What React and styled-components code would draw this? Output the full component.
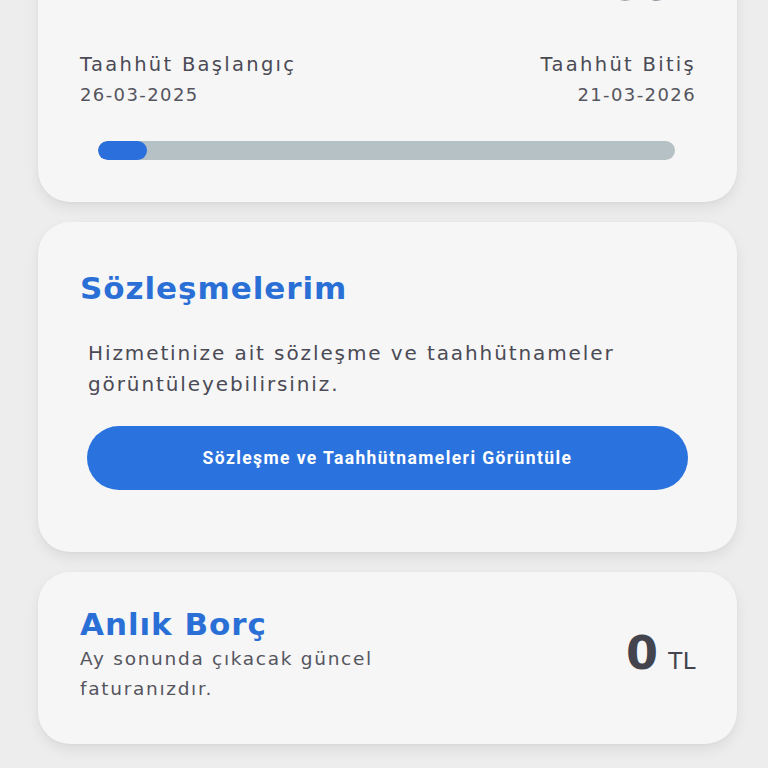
import React from "react";
import styled, { createGlobalStyle } from "styled-components";

const GlobalStyle = createGlobalStyle`
  html, body {
    margin: 0;
    padding: 0;
    background: #ededed;
    overflow: hidden;
  }
  body {
    font-family: "DejaVu Sans", "Noto Sans", sans-serif;
    color: #4a4a55;
  }
`;

const Page = styled.main`
  display: flex;
  flex-direction: column;
  gap: 20px;
  padding: 0 31px 0 38px;
  height: 768px;
  overflow: hidden;
`;

const Card = styled.section`
  background: #f6f6f6;
  border-radius: 32px;
  box-shadow: 0 6px 14px rgba(0, 0, 0, 0.07), 0 1px 3px rgba(0, 0, 0, 0.04);
  padding: ${(p) => p.$pad || "0 41px 0 42px"};
  margin-top: ${(p) => p.$offset || "0"};
  display: flex;
  flex-direction: column;
  flex-shrink: 0;
`;

const Amount = styled.div`
  align-self: flex-end;
  margin-right: 22px;
  font-size: 44px;
  font-weight: 700;
  line-height: 1;
  color: #5a5a62;
  letter-spacing: 0.5px;
`;

const DatesRow = styled.div`
  display: flex;
  justify-content: space-between;
  margin-top: 43px;
`;

const DateCol = styled.div`
  display: flex;
  flex-direction: column;
  align-items: ${(p) => (p.$right ? "flex-end" : "flex-start")};
`;

const DateLabel = styled.span`
  font-size: 19.5px;
  line-height: 30px;
  color: #4a4a55;
  letter-spacing: 2.3px;
`;

const DateValue = styled.span`
  font-size: 18px;
  line-height: 30px;
  color: #55555e;
  letter-spacing: 1.4px;
`;

const Track = styled.div`
  margin: 31px 21px 42px 18px;
  height: 19px;
  border-radius: 10px;
  background: #b6c1c5;
  overflow: hidden;
`;

const Fill = styled.div`
  height: 100%;
  border-radius: 10px;
  background: #2b6fdc;
`;

const Title = styled.h2`
  margin: 0;
  font-size: 31px;
  font-weight: 700;
  line-height: 40px;
  color: #2a6fd6;
  letter-spacing: 0.95px;
`;

const Description = styled.p`
  margin: 30px 0 0 8px;
  font-size: 20px;
  line-height: 31px;
  color: #4a4a55;
  letter-spacing: 1.9px;
`;

const Button = styled.button`
  margin: 26px 7px 0 7px;
  height: 64px;
  border: none;
  border-radius: 32px;
  background: #2a72de;
  color: #ffffff;
  font-family: "Roboto", "Liberation Sans", sans-serif;
  font-size: 17.5px;
  font-weight: 700;
  letter-spacing: 1.4px;
  cursor: pointer;
`;

const DebtRow = styled.div`
  display: flex;
  justify-content: space-between;
  align-items: flex-start;
`;

const DebtInfo = styled.div`
  display: flex;
  flex-direction: column;
`;

const DebtText = styled.p`
  margin: 0;
  max-width: 340px;
  font-size: 18.5px;
  line-height: 30px;
  color: #55555e;
  letter-spacing: 1.7px;
`;

const Total = styled.div`
  display: flex;
  align-items: baseline;
  gap: 10px;
  margin-top: 26px;
  color: #44444e;
`;

const TotalValue = styled.span`
  font-size: 46px;
  font-weight: 700;
  line-height: 1;
`;

const TotalUnit = styled.span`
  font-size: 23px;
  line-height: 1;
  letter-spacing: 0.5px;
`;

export default function App() {
  const progress = 8.5;
  return (
    <>
      <GlobalStyle />
      <Page>
        <Card $offset="-80px" $pad="43px 41px 0 42px">
          <Amount>235</Amount>
          <DatesRow>
            <DateCol>
              <DateLabel>Taahhüt Başlangıç</DateLabel>
              <DateValue>26-03-2025</DateValue>
            </DateCol>
            <DateCol $right>
              <DateLabel>Taahhüt Bitiş</DateLabel>
              <DateValue>21-03-2026</DateValue>
            </DateCol>
          </DatesRow>
          <Track>
            <Fill style={{ width: `${progress}%` }} />
          </Track>
        </Card>

        <Card $pad="46px 42px 62px 42px">
          <Title>Sözleşmelerim</Title>
          <Description>
            Hizmetinize ait sözleşme ve taahhütnameler görüntüleyebilirsiniz.
          </Description>
          <Button>Sözleşme ve Taahhütnameleri Görüntüle</Button>
        </Card>

        <Card $pad="32px 41px 40px 42px">
          <DebtRow>
            <DebtInfo>
              <Title>Anlık Borç</Title>
              <DebtText>Ay sonunda çıkacak güncel faturanızdır.</DebtText>
            </DebtInfo>
            <Total>
              <TotalValue>0</TotalValue>
              <TotalUnit>TL</TotalUnit>
            </Total>
          </DebtRow>
        </Card>
      </Page>
    </>
  );
}
